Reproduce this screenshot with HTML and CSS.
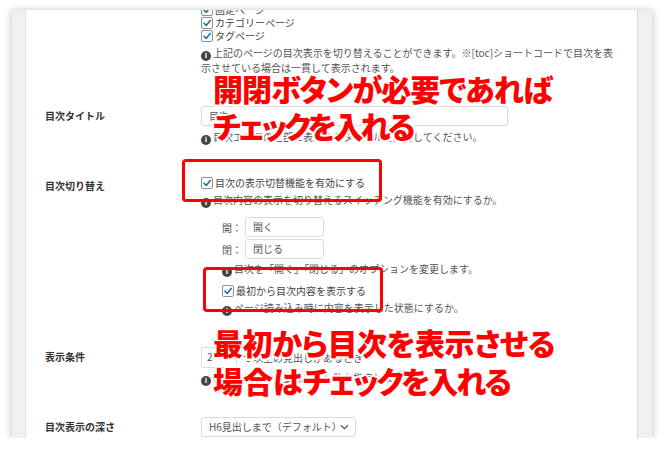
FILE: index.html
```html
<!DOCTYPE html>
<html lang="ja">
<head>
<meta charset="utf-8">
<link rel="stylesheet" href="styles.css">
</head>
<body>
<div class="card">
  <div class="strip strip-l"></div>
  <div class="content">
    <div class="row row-first">
      <div class="label"></div>
      <div class="value">
        <div class="cb"><span class="box"><svg viewBox="0 0 10 10"><path d="M2 5.2 L4.2 7.4 L8.2 2.4" /></svg></span>固定ページ</div>
        <div class="cb"><span class="box"><svg viewBox="0 0 10 10"><path d="M2 5.2 L4.2 7.4 L8.2 2.4" /></svg></span>カテゴリーページ</div>
        <div class="cb"><span class="box"><svg viewBox="0 0 10 10"><path d="M2 5.2 L4.2 7.4 L8.2 2.4" /></svg></span>タグページ</div>
        <p class="help"><span class="info">i</span>上記のページの目次表示を切り替えることができます。※[toc]ショートコードで目次を表示させている場合は一貫して表示されます。</p>
      </div>
    </div>
    <div class="row">
      <div class="label">目次タイトル</div>
      <div class="value">
        <div class="input w-title">目次</div>
        <p class="help"><span class="info">i</span>目次エリアの上部に表示するタイトルを入力してください。</p>
      </div>
    </div>
    <div class="row">
      <div class="label">目次切り替え</div>
      <div class="value">
        <div class="cb"><span class="box"><svg viewBox="0 0 10 10"><path d="M2 5.2 L4.2 7.4 L8.2 2.4" /></svg></span>目次の表示切替機能を有効にする</div>
        <p class="help"><span class="info">i</span>目次内容の表示を切り替えるスイッチング機能を有効にするか。</p>
        <div class="sub">
          <div class="pair"><span class="pair-label">開：</span><div class="input w-sub">開く</div></div>
          <div class="pair"><span class="pair-label">閉：</span><div class="input w-sub">閉じる</div></div>
          <p class="help help-sub"><span class="info">i</span>目次を「開く」「閉じる」のオプションを変更します。</p>
          <div class="cb cb-sub"><span class="box"><svg viewBox="0 0 10 10"><path d="M2 5.2 L4.2 7.4 L8.2 2.4" /></svg></span>最初から目次内容を表示する</div>
          <p class="help"><span class="info">i</span>ページ読み込み時に内容を表示した状態にするか。</p>
        </div>
      </div>
    </div>
    <div class="row">
      <div class="label">表示条件</div>
      <div class="value">
        <div class="inline"><div class="input w-num">2</div><span>つ以上の見出しがあるとき</span></div>
        <p class="help help-num"><span class="info">i</span>表示するのに必要な見出し数を指定します。</p>
      </div>
    </div>
    <div class="row">
      <div class="label">目次表示の深さ</div>
      <div class="value">
        <div class="input select">H6見出しまで（デフォルト）<svg class="chev" viewBox="0 0 10 6"><path d="M1 1 L5 5 L9 1" /></svg></div>
      </div>
    </div>
  </div>
  <div class="strip strip-r"></div>

  <div class="redbox rb1"></div>
  <div class="redbox rb2"></div>
  <div class="callout c1"><span class="l1">開閉ボタンが必要であれば</span><br><span class="l2">チェックを入れる</span></div>
  <div class="callout c2"><span class="l3">最初から目次を表示させる</span><br>場合は<span class="l4">チェックを入れる</span></div>
</div>
</body>
</html>
```
FILE: styles.css
```css
html, body {
  margin: 0;
  padding: 0;
  background: #fff;
}
body {
  font-family: "Noto Sans CJK JP", "Noto Sans", sans-serif;
}
.card {
  position: relative;
  margin: 10px 0 0 12px;
  width: 640px;
  height: 428px;
  display: flex;
  overflow: hidden;
  background: #fff;
  box-shadow: 0 1px 8px rgba(0, 0, 0, 0.28);
}
.strip {
  flex: none;
  background: #f0f0f0;
}
.strip-l {
  width: 13px;
  border-right: 1px solid #e3e3e3;
}
.strip-r {
  width: 14px;
  border-left: 1px solid #dcdcdc;
}
.content {
  flex: 1;
  margin-top: -7px;
  padding-left: 19px;
}
.row {
  display: grid;
  grid-template-columns: 156px 415px;
  padding: 16px 0 15px;
}
.row-first {
  padding-top: 0;
}
.label {
  font-size: 10px;
  font-weight: bold;
  color: #333;
  line-height: 14px;
  padding-top: 3px;
}
.value {
  font-size: 10px;
  color: #555;
}
.cb {
  display: flex;
  align-items: center;
  height: 13px;
  line-height: 13px;
  gap: 2px;
  color: #444;
}
.box {
  flex: none;
  width: 10px;
  height: 10px;
  border: 1px solid #8c8f94;
  border-radius: 2px;
  background: #fff;
  display: flex;
}
.box svg {
  width: 10px;
  height: 10px;
}
.box path {
  fill: none;
  stroke: #2271b1;
  stroke-width: 1.6;
  stroke-linecap: round;
  stroke-linejoin: round;
}
.help {
  margin: 4px 0 0;
  line-height: 14px;
  color: #555;
}
.info {
  display: inline-block;
  width: 10px;
  height: 10px;
  border-radius: 50%;
  background: #444;
  color: #fff;
  font-family: "DejaVu Sans", sans-serif;
  font-weight: bold;
  font-size: 7px;
  line-height: 10px;
  text-align: center;
  margin-right: 2px;
  vertical-align: -1px;
}
.input {
  box-sizing: border-box;
  height: 20px;
  border: 1px solid #dcdcde;
  border-radius: 3px;
  padding: 0 7px;
  line-height: 18px;
  font-size: 10px;
  color: #555;
  background: #fff;
}
.w-title {
  width: 307px;
}
.sub {
  padding-left: 21px;
  margin-top: 9px;
}
.pair {
  display: flex;
  align-items: center;
  gap: 3px;
  margin-bottom: 2px;
}
.pair-label {
  color: #555;
}
.w-sub {
  width: 79px;
}
.help-sub {
  margin-top: 3px;
}
.cb-sub {
  margin-top: 7px;
}
.inline {
  display: flex;
  align-items: center;
  gap: 6px;
}
.w-num {
  width: 36px;
  height: 21px;
  padding: 0 5px;
}
.help-num {
  margin-top: 3px;
}
.select {
  width: 155px;
  display: flex;
  align-items: center;
  justify-content: space-between;
  padding: 0 6px 0 7px;
}
.chev {
  width: 9px;
  height: 6px;
}
.chev path {
  fill: none;
  stroke: #555;
  stroke-width: 1.3;
}
.redbox {
  position: absolute;
  box-sizing: border-box;
  border: 3px solid #ff0000;
  border-radius: 4px;
}
.rb1 {
  left: 170px;
  top: 149px;
  width: 200px;
  height: 43px;
}
.rb2 {
  left: 191px;
  top: 257px;
  width: 180px;
  height: 45px;
}
.callout {
  position: absolute;
  left: 201px;
  font-family: "Noto Sans CJK JP", sans-serif;
  font-weight: 900;
  font-size: 30px;
  line-height: 37px;
  color: #ff0000;
  font-feature-settings: "palt";
  white-space: nowrap;
  text-shadow: 2px 0 #fff, -2px 0 #fff, 0 2px #fff, 0 -2px #fff,
    1.5px 1.5px #fff, -1.5px 1.5px #fff, 1.5px -1.5px #fff, -1.5px -1.5px #fff;
}
.c1 {
  top: 60px;
}
.c2 {
  top: 313px;
  line-height: 38px;
}
.l1 {
  letter-spacing: -1px;
}
.l2 {
  letter-spacing: -3px;
}
.l3 {
  letter-spacing: -0.4px;
}
.l4 {
  letter-spacing: -2px;
}
```
